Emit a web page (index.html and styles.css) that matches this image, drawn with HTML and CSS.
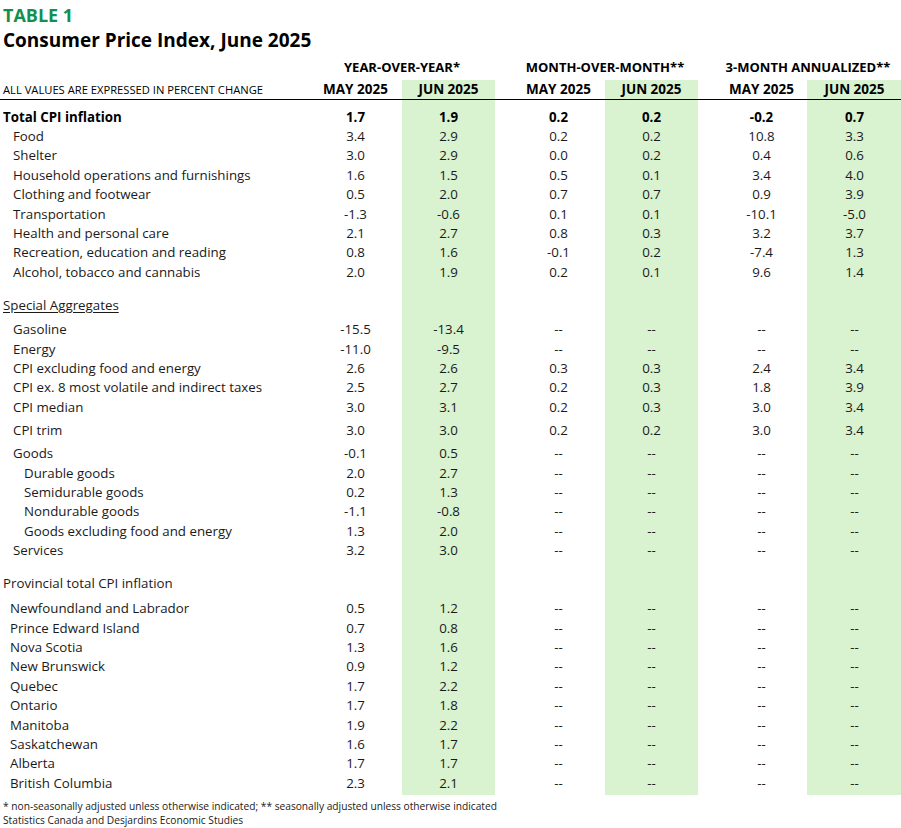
FILE: index.html
```html
<!DOCTYPE html>
<html lang="en">
<head>
<meta charset="utf-8">
<title>Table 1 – Consumer Price Index, June 2025</title>
<link rel="stylesheet" href="styles.css">
</head>
<body>
<div class="page">
  <div class="kicker">TABLE 1</div>
  <h1 class="title">Consumer Price Index, June 2025</h1>

  <div class="r groups">
    <div></div>
    <div class="g">YEAR-OVER-YEAR*</div>
    <div class="g">MONTH-OVER-MONTH**</div>
    <div class="g">3-MONTH ANNUALIZED**</div>
  </div>

  <div class="body">
    <div class="r heads">
      <div class="lab note">ALL VALUES ARE EXPRESSED IN PERCENT CHANGE</div>
      <div>MAY 2025</div><div>JUN 2025</div>
      <div>MAY 2025</div><div>JUN 2025</div>
      <div>MAY 2025</div><div>JUN 2025</div>
    </div>

    <div class="rows">
      <div class="r total first"><div class="lab l0">Total CPI inflation</div><div>1.7</div><div>1.9</div><div>0.2</div><div>0.2</div><div>-0.2</div><div>0.7</div></div>
      <div class="r"><div class="lab l1">Food</div><div>3.4</div><div>2.9</div><div>0.2</div><div>0.2</div><div>10.8</div><div>3.3</div></div>
      <div class="r"><div class="lab l1">Shelter</div><div>3.0</div><div>2.9</div><div>0.0</div><div>0.2</div><div>0.4</div><div>0.6</div></div>
      <div class="r"><div class="lab l1">Household operations and furnishings</div><div>1.6</div><div>1.5</div><div>0.5</div><div>0.1</div><div>3.4</div><div>4.0</div></div>
      <div class="r"><div class="lab l1">Clothing and footwear</div><div>0.5</div><div>2.0</div><div>0.7</div><div>0.7</div><div>0.9</div><div>3.9</div></div>
      <div class="r"><div class="lab l1">Transportation</div><div>-1.3</div><div>-0.6</div><div>0.1</div><div>0.1</div><div>-10.1</div><div>-5.0</div></div>
      <div class="r"><div class="lab l1">Health and personal care</div><div>2.1</div><div>2.7</div><div>0.8</div><div>0.3</div><div>3.2</div><div>3.7</div></div>
      <div class="r"><div class="lab l1">Recreation, education and reading</div><div>0.8</div><div>1.6</div><div>-0.1</div><div>0.2</div><div>-7.4</div><div>1.3</div></div>
      <div class="r"><div class="lab l1">Alcohol, tobacco and cannabis</div><div>2.0</div><div>1.9</div><div>0.2</div><div>0.1</div><div>9.6</div><div>1.4</div></div>

      <div class="r section sp-a"><div class="lab l0"><span class="u">Special Aggregates</span></div></div>
      <div class="r sp-b"><div class="lab l1">Gasoline</div><div>-15.5</div><div>-13.4</div><div>--</div><div>--</div><div>--</div><div>--</div></div>
      <div class="r"><div class="lab l1">Energy</div><div>-11.0</div><div>-9.5</div><div>--</div><div>--</div><div>--</div><div>--</div></div>
      <div class="r"><div class="lab l1">CPI excluding food and energy</div><div>2.6</div><div>2.6</div><div>0.3</div><div>0.3</div><div>2.4</div><div>3.4</div></div>
      <div class="r"><div class="lab l1">CPI ex. 8 most volatile and indirect taxes</div><div>2.5</div><div>2.7</div><div>0.2</div><div>0.3</div><div>1.8</div><div>3.9</div></div>
      <div class="r"><div class="lab l1">CPI median</div><div>3.0</div><div>3.1</div><div>0.2</div><div>0.3</div><div>3.0</div><div>3.4</div></div>
      <div class="r sp-c"><div class="lab l1">CPI trim</div><div>3.0</div><div>3.0</div><div>0.2</div><div>0.2</div><div>3.0</div><div>3.4</div></div>
      <div class="r sp-c"><div class="lab l1">Goods</div><div>-0.1</div><div>0.5</div><div>--</div><div>--</div><div>--</div><div>--</div></div>
      <div class="r"><div class="lab l2">Durable goods</div><div>2.0</div><div>2.7</div><div>--</div><div>--</div><div>--</div><div>--</div></div>
      <div class="r"><div class="lab l2">Semidurable goods</div><div>0.2</div><div>1.3</div><div>--</div><div>--</div><div>--</div><div>--</div></div>
      <div class="r"><div class="lab l2">Nondurable goods</div><div>-1.1</div><div>-0.8</div><div>--</div><div>--</div><div>--</div><div>--</div></div>
      <div class="r"><div class="lab l2">Goods excluding food and energy</div><div>1.3</div><div>2.0</div><div>--</div><div>--</div><div>--</div><div>--</div></div>
      <div class="r"><div class="lab l1">Services</div><div>3.2</div><div>3.0</div><div>--</div><div>--</div><div>--</div><div>--</div></div>

      <div class="r section sp-a"><div class="lab l0">Provincial total CPI inflation</div></div>
      <div class="r sp-d"><div class="lab lp">Newfoundland and Labrador</div><div>0.5</div><div>1.2</div><div>--</div><div>--</div><div>--</div><div>--</div></div>
      <div class="r"><div class="lab lp">Prince Edward Island</div><div>0.7</div><div>0.8</div><div>--</div><div>--</div><div>--</div><div>--</div></div>
      <div class="r"><div class="lab lp">Nova Scotia</div><div>1.3</div><div>1.6</div><div>--</div><div>--</div><div>--</div><div>--</div></div>
      <div class="r"><div class="lab lp">New Brunswick</div><div>0.9</div><div>1.2</div><div>--</div><div>--</div><div>--</div><div>--</div></div>
      <div class="r"><div class="lab lp">Quebec</div><div>1.7</div><div>2.2</div><div>--</div><div>--</div><div>--</div><div>--</div></div>
      <div class="r"><div class="lab lp">Ontario</div><div>1.7</div><div>1.8</div><div>--</div><div>--</div><div>--</div><div>--</div></div>
      <div class="r"><div class="lab lp">Manitoba</div><div>1.9</div><div>2.2</div><div>--</div><div>--</div><div>--</div><div>--</div></div>
      <div class="r"><div class="lab lp">Saskatchewan</div><div>1.6</div><div>1.7</div><div>--</div><div>--</div><div>--</div><div>--</div></div>
      <div class="r"><div class="lab lp">Alberta</div><div>1.7</div><div>1.7</div><div>--</div><div>--</div><div>--</div><div>--</div></div>
      <div class="r"><div class="lab lp">British Columbia</div><div>2.3</div><div>2.1</div><div>--</div><div>--</div><div>--</div><div>--</div></div>
    </div>
  </div>

  <div class="foot">
    <p>* non-seasonally adjusted unless otherwise indicated; ** seasonally adjusted unless otherwise indicated</p>
    <p>Statistics Canada and Desjardins Economic Studies</p>
  </div>
</div>
</body>
</html>
```

FILE: styles.css
```css
* { box-sizing: border-box; }

html, body {
  margin: 0;
  padding: 0;
  background: #fff;
}

body {
  font-family: "Open Sans", "Noto Sans", sans-serif;
  color: #1a1a1a;
  font-size: 13.3px;
}

.page {
  width: 901px;
  padding-top: 3px;
}

.kicker {
  color: #138f4e;
  font-weight: 700;
  font-size: 18px;
  line-height: 24px;
  padding-left: 3px;
}

.title {
  margin: 1px 0 0;
  font-size: 19px;
  line-height: 24px;
  font-weight: 700;
  color: #000;
  padding-left: 3px;
}

.r {
  display: grid;
  grid-template-columns: 309px 93px 93px 110px 93px 110px 93px;
  align-items: center;
  height: 19.4px;
  line-height: 19px;
  white-space: nowrap;
}

.r > div { text-align: center; }
.r > div:nth-child(4),
.r > div:nth-child(6) { padding-left: 17px; }
.r > .lab { text-align: left; }

.groups {
  margin-top: 4px;
  height: 22px;
  font-weight: 700;
  font-size: 13px;
  color: #000;
}
.groups > .g { grid-column: span 2; }
.groups > div:nth-child(3) { padding-left: 17px; }
.groups > div:nth-child(4) { padding-left: 17px; }
.groups > div:nth-child(2),
.groups > div:nth-child(3),
.groups > div:nth-child(4) { text-align: center; }

.body {
  margin-top: 2px;
  background-image: linear-gradient(to right,
    transparent 0 402px,
    #d9f2d0 402px 495px,
    transparent 495px 605px,
    #d9f2d0 605px 698px,
    transparent 698px 807px,
    #d9f2d0 807px 901px);
  padding-bottom: 2.5px;
}

.heads {
  height: 20px;
  border-bottom: 1px solid #000;
  font-weight: 700;
  font-size: 13.5px;
  color: #000;
}
.heads > .note {
  font-weight: 400;
  font-size: 11.2px;
  padding-left: 3px;
}

.rows { padding-top: 7.5px; }

.total { font-weight: 700; color: #000; }

.lab.l0 { padding-left: 3px; }
.lab.l1 { padding-left: 13px; }
.lab.l2 { padding-left: 24px; }
.lab.lp { padding-left: 10px; }

.u { text-decoration: underline; text-underline-offset: 2px; }

.sp-a { margin-top: 13.8px; }
.sp-b { margin-top: 4.8px; }
.sp-c { margin-top: 3.8px; }
.sp-d { margin-top: 5.6px; }

.foot {
  margin-top: 4px;
  font-size: 10.2px;
  line-height: 14px;
  padding-left: 3px;
  color: #1a1a1a;
}
.foot p { margin: 0; }
```
